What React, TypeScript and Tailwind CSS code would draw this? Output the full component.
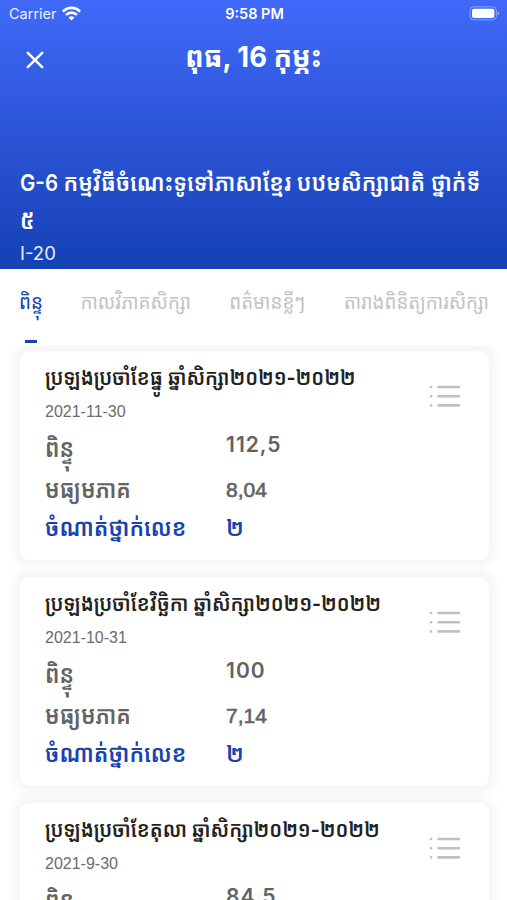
import React from "react";

const khmer = "font-['Inter','Noto_Sans_Khmer','Khmer_OS','Noto_Sans',sans-serif]";

type Exam = { title: string; date: string; score: string; average: string; rank: string };

const exams: Exam[] = [
  { title: "ប្រឡងប្រចាំខែធ្នូ ឆ្នាំសិក្សា២០២១-២០២២", date: "2021-11-30", score: "112,5", average: "8,04", rank: "២" },
  { title: "ប្រឡងប្រចាំខែវិច្ឆិកា ឆ្នាំសិក្សា២០២១-២០២២", date: "2021-10-31", score: "100", average: "7,14", rank: "២" },
  { title: "ប្រឡងប្រចាំខែតុលា ឆ្នាំសិក្សា២០២១-២០២២", date: "2021-9-30", score: "84,5", average: "", rank: "" },
];

function WifiIcon() {
  return (
    <svg width="19" height="15" viewBox="0 0 19 15" fill="none" stroke="white" strokeWidth="2.6">
      <path d="M0.9 5.6C5.7 0.6 13.3 0.6 18.1 5.6" />
      <path d="M4 8.9C7.2 5.8 11.8 5.8 15 8.9" />
      <path d="M9.5 14.4L6.5 11.4C8.2 9.8 10.8 9.8 12.5 11.4Z" fill="white" stroke="none" />
    </svg>
  );
}

function BatteryIcon() {
  return (
    <svg width="31" height="15" viewBox="0 0 31 15">
      <rect x="1" y="0.8" width="26.4" height="13" rx="3.8" fill="none" stroke="white" strokeOpacity="0.4" />
      <rect x="3" y="2.7" width="22.4" height="9.2" rx="2" fill="white" />
      <path d="M28.7 5.2C30.5 6 30.5 8.7 28.7 9.5Z" fill="white" fillOpacity="0.5" />
    </svg>
  );
}

function ListIcon() {
  return (
    <svg width="32" height="24" viewBox="0 0 32 24" stroke="#c0c0c0" strokeWidth="2.6" strokeLinecap="round">
      <path d="M9.5 3H30M9.5 12.2H30M9.5 21.4H30M2 3H2.1M2 12.2H2.1M2 21.4H2.1" />
    </svg>
  );
}

function ExamCard({ exam }: { exam: Exam }) {
  return (
    <article className="flex h-[209px] shrink-0 justify-between rounded-[9px] bg-white pr-7 pl-[25px] shadow-[0_0_10px_6px_rgba(0,0,0,0.045)]">
      <div className="flex flex-col whitespace-nowrap">
        <h2 className="mt-[9px] h-[34px] scale-y-110 text-[19.5px] leading-[34px] font-semibold text-[#222]">{exam.title}</h2>
        <p className="mt-[7px] h-5 font-['Liberation_Sans',sans-serif] text-[16px] leading-[21px] text-[#6b6b6b]">{exam.date}</p>
        <div className="mt-1 grid w-[300px] grid-cols-[181px_1fr] text-[22px] font-semibold text-[#636363]">
          <span className="h-[45px] scale-y-115 leading-[46px]">ពិន្ទុ</span>
          <span className="h-[45px] text-[21px] leading-[39px] tracking-[1px]">{exam.score}</span>
          <span className="h-[39px] scale-y-115 leading-[38px]">មធ្យមភាគ</span>
          <span className="h-[39px] font-['Liberation_Sans',sans-serif] text-[21px] leading-[39px] font-normal [-webkit-text-stroke:0.6px_#636363]">{exam.average}</span>
          <span className="h-[38px] scale-y-110 leading-[37px] text-[#1742b0]">ចំណាត់ថ្នាក់លេខ</span>
          <span className="h-[38px] scale-y-110 leading-[37px] text-[#1742b0]">{exam.rank}</span>
        </div>
      </div>
      <button aria-label="Details" className="mt-[33px] h-6 w-8 shrink-0"><ListIcon /></button>
    </article>
  );
}

export default function App() {
  return (
    <div className={`flex h-[900px] w-[507px] flex-col overflow-hidden bg-white ${khmer}`}>
      <header className="flex h-[269px] shrink-0 flex-col bg-linear-to-b from-[#4069f9] to-[#1441b5] text-white">
        <div className="grid h-[27px] grid-cols-3 items-center pr-[7px] pl-[9px] text-[14.5px]">
          <div className="flex items-center gap-[5px] font-['Inter',sans-serif] text-white/90"><span>Carrier</span><WifiIcon /></div>
          <div className="text-center font-['Inter',sans-serif] font-semibold">9:58 PM</div>
          <div className="flex justify-end"><BatteryIcon /></div>
        </div>
        <div className="grid h-[66px] grid-cols-[100px_1fr_100px] items-center">
          <button aria-label="Close" className="ml-[26px] w-[18px]">
            <svg width="18" height="18" viewBox="0 0 18 18" stroke="white" strokeWidth="2.5" strokeLinecap="round"><path d="M1.8 1.8L16.2 16.2M16.2 1.8L1.8 16.2" /></svg>
          </button>
          <h1 className="mb-2 scale-y-105 text-center text-[27.4px] leading-[50px] font-bold whitespace-nowrap">ពុធ, 16 កុម្ភះ</h1>
        </div>
        <div className="mt-[70px] pl-5">
          <p className="h-[38px] scale-y-110 text-[22px] leading-[38px] font-semibold whitespace-nowrap"><span className="text-[20.5px]">G-6</span> កម្មវិធីចំណេះទូទៅភាសាខ្មែរ បឋមសិក្សាជាតិ ថ្នាក់ទី</p>
          <p className="h-[38px] scale-y-110 text-[22px] leading-[38px] font-semibold">៥</p>
          <p className="h-[26px] text-[18.5px] leading-[28px] text-white/90">I-20</p>
        </div>
      </header>
      <nav className="flex h-[77px] shrink-0 justify-between bg-white pr-[18px] pl-5 text-[18.8px] whitespace-nowrap text-[#c3c3c3]">
        <div className="flex w-[22px] flex-col items-center text-[#1742b0]">
          <span className="mt-[15px] h-9 scale-y-110 leading-9">ពិន្ទុ</span>
          <span className="mt-[20px] h-[3px] w-3 shrink-0 bg-[#1742b0]" />
        </div>
        <span className="mt-[15px] h-9 scale-y-110 leading-9">កាលវិភាគសិក្សា</span>
        <span className="mt-[15px] h-9 scale-y-110 leading-9">ពត៌មានខ្លីៗ</span>
        <span className="mt-[15px] h-9 scale-y-110 leading-9">តារាងពិនិត្យការសិក្សា</span>
      </nav>
      <main className="flex min-h-0 flex-1 flex-col gap-[17px] overflow-hidden pt-[5px] pr-[18px] pl-5">
        {exams.map((exam) => <ExamCard key={exam.date} exam={exam} />)}
      </main>
    </div>
  );
}
